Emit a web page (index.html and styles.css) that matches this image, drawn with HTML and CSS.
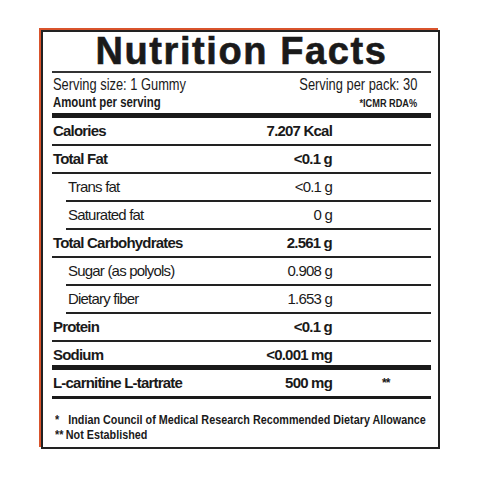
FILE: index.html
```html
<!DOCTYPE html>
<html lang="en">

<head>
  <meta charset="UTF-8">
  <meta name="viewport" content="width=device-width, initial-scale=1.0">
  <link rel="stylesheet" href="styles.css">
  <title>Nutrition Facts</title>
</head>

<body>
  <div class="label">
    <h1 class="title">Nutrition Facts</h1>
    <div class="serving">
      <span class="cond">Serving size: 1 Gummy</span>
      <span class="cond right">Serving per pack: 30</span>
    </div>
    <div class="amount">
      <span class="cond">Amount per serving</span>
      <span class="cond right rda">*ICMR RDA%</span>
    </div>
    <!-- nutrient rows -->
    <div class="facts">
      <div class="row bold"><span>Calories</span><span class="val">7.207 Kcal</span><span></span></div>
      <div class="row bold"><span>Total Fat</span><span class="val">&lt;0.1 g</span><span></span></div>
      <div class="row sub"><span>Trans fat</span><span class="val">&lt;0.1 g</span><span></span></div>
      <div class="row sub"><span>Saturated fat</span><span class="val">0 g</span><span></span></div>
      <div class="row bold"><span>Total Carbohydrates</span><span class="val">2.561 g</span><span></span></div>
      <div class="row sub"><span>Sugar (as polyols)</span><span class="val">0.908 g</span><span></span></div>
      <div class="row sub"><span>Dietary fiber</span><span class="val">1.653 g</span><span></span></div>
      <div class="row bold"><span>Protein</span><span class="val">&lt;0.1 g</span><span></span></div>
      <div class="row bold thick"><span>Sodium</span><span class="val">&lt;0.001 mg</span><span></span></div>
      <div class="row bold last"><span>L-carnitine L-tartrate</span><span class="val">500 mg</span><span class="note">**</span></div>
    </div>
    <div class="footnotes">
      <p><span class="star">*</span>Indian Council of Medical Research Recommended Dietary Allowance</p>
      <p><span class="star2">**</span>Not Established</p>
    </div>
  </div>
</body>

</html>
```

FILE: styles.css
```css
body {
  margin: 0;
  background-color: #fff;
  color: #1a1a1a;
  font-family: 'Liberation Sans', Arial, sans-serif;
}

.label {
  box-sizing: border-box;
  width: 399px;
  margin: 30px 0 0 41px;
  padding: 0 7px 0 9px;
  border: 2px solid #222;
  /* orange edge on the top and left */
  box-shadow: -2px -2px 0 #d9542c;
}

.title {
  margin: 0;
  font-size: 38px;
  line-height: 39px;
  letter-spacing: 1.6px;
  text-align: center;
  -webkit-text-stroke: 0.6px #1a1a1a;
  border-bottom: 2px solid #333;
}

.serving,
.amount {
  display: flex;
  justify-content: space-between;
  align-items: baseline;
  padding: 0 14px 0 1px;
  white-space: nowrap;
}

/* condensed type, squeezed from the regular face */
.cond {
  display: inline-block;
  transform: scaleX(0.78);
  transform-origin: left;
}

.cond.right {
  transform-origin: right;
}

.serving {
  margin-top: 2px;
  font-size: 16.5px;
  line-height: 18px;
}

.amount {
  font-size: 15px;
  line-height: 17px;
  font-weight: bold;
  padding-bottom: 1px;
  border-bottom: 5px solid #1a1a1a;
}

.amount .cond {
  transform: scaleX(0.76);
}

.amount .rda {
  font-size: 11.5px;
  transform: scaleX(0.8);
}

.row {
  display: grid;
  grid-template-columns: 1fr 120px 99px;
  height: 26px;
  line-height: 26px;
  padding-left: 1px;
  font-size: 15px;
  letter-spacing: -0.8px;
  border-bottom: 2px solid #222;
}

.val {
  text-align: right;
}

.bold {
  font-weight: bold;
}

.sub {
  margin-left: 14px;
  padding-left: 2px;
}

.thick {
  height: 23px;
  border-bottom: 5px solid #1a1a1a;
}

.last {
  border-bottom: 3px solid #1a1a1a;
}

.note {
  padding-left: 50px;
  font-size: 12px;
}

.footnotes {
  padding: 13px 0 5px 3px;
  font-size: 13px;
  font-weight: bold;
  line-height: 15px;
}

.footnotes p {
  margin: 0;
  white-space: nowrap;
  transform: scaleX(0.83);
  transform-origin: left;
}

.star {
  display: inline-block;
  width: 16px;
}

.star2 {
  display: inline-block;
  width: 13px;
}
```
